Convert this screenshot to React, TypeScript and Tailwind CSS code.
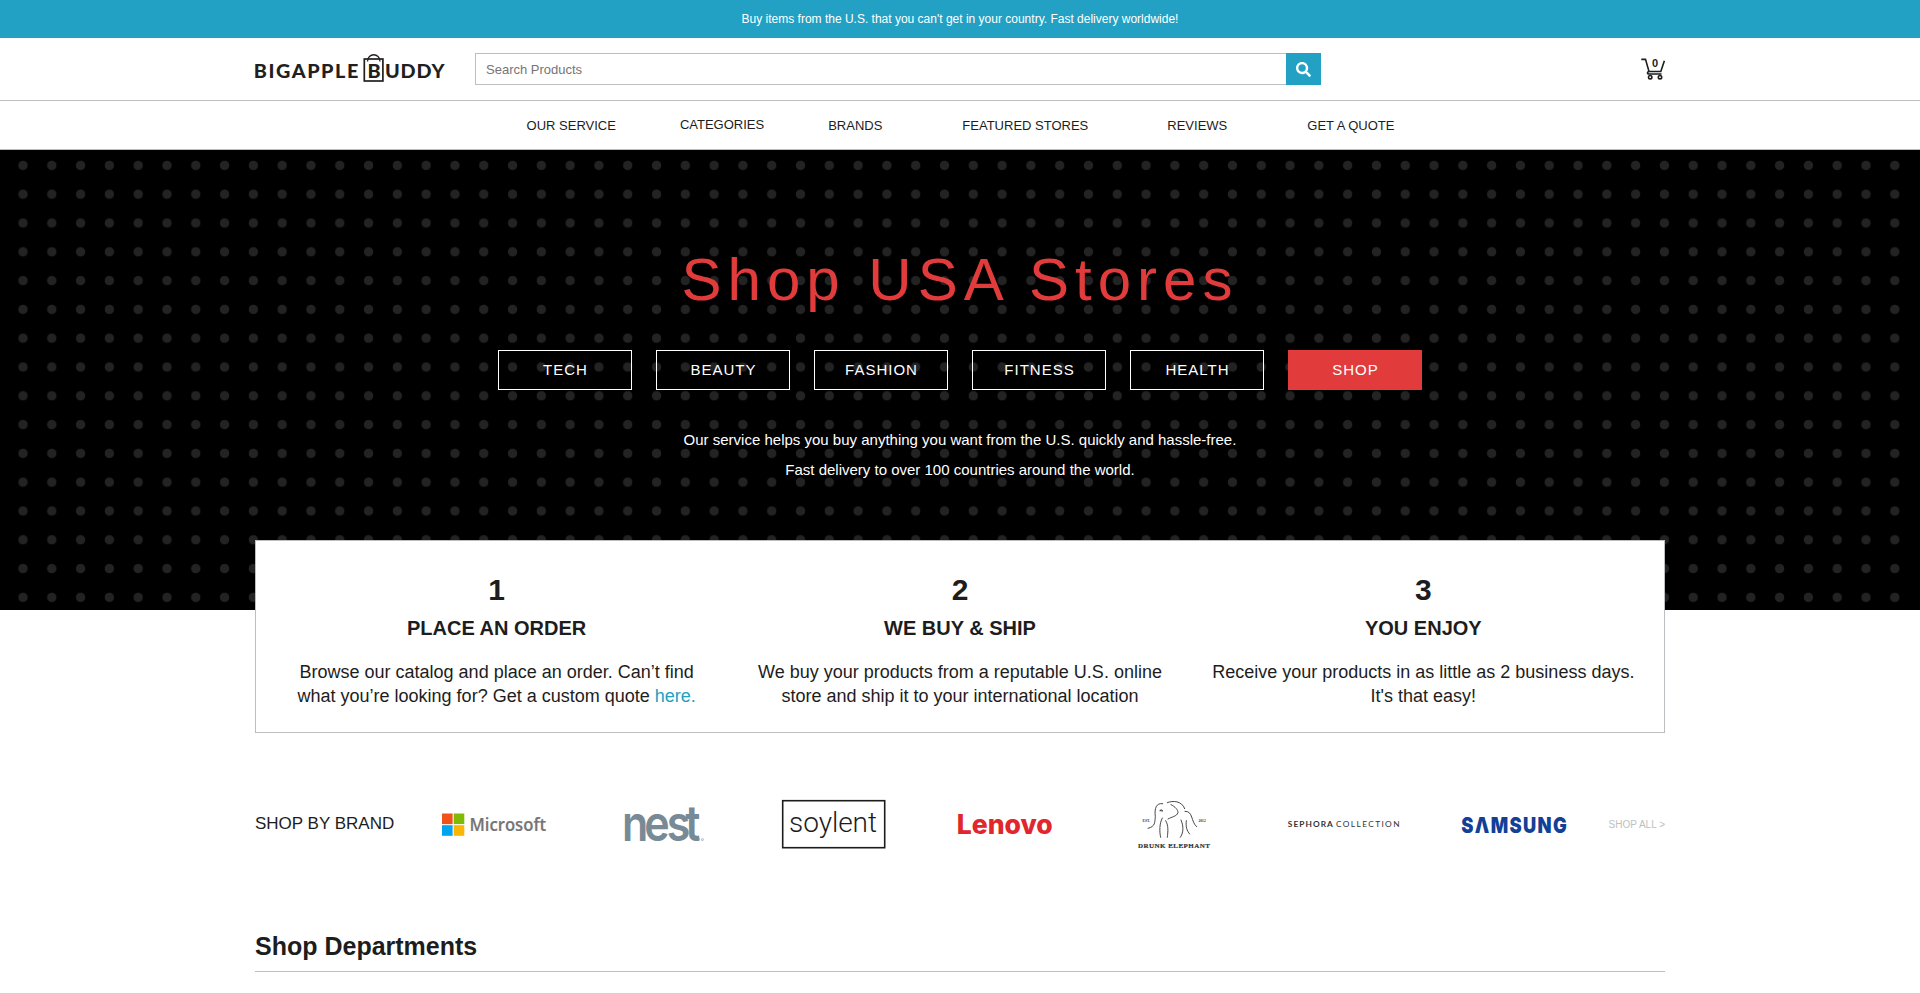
import React from 'react';
import { FaSearch } from 'react-icons/fa';

interface NavItem {
    label: string;
    className: string;
}

interface Step {
    number: number;
    title: string;
    body: React.ReactNode;
}

const navItems: NavItem[] = [
    { label: 'OUR SERVICE', className: 'px-10' },
    { label: 'CATEGORIES', className: 'px-6 pb-0.5' },
    { label: 'BRANDS', className: 'px-10' },
    { label: 'FEATURED STORES', className: 'pl-10 pr-[39px]' },
    { label: 'REVIEWS', className: 'px-10' },
    { label: 'GET A QUOTE', className: 'px-10' },
];

const heroLinks = ['TECH', 'BEAUTY', 'FASHION', 'FITNESS', 'HEALTH'];

const steps: Step[] = [
    {
        number: 1,
        title: 'PLACE AN ORDER',
        body: (
            <>
                Browse our catalog and place an order. Can’t find
                <br />
                what you’re looking for? Get a custom quote{' '}
                <a href="#" className="text-[#22a1c4]">
                    here.
                </a>
            </>
        ),
    },
    {
        number: 2,
        title: 'WE BUY & SHIP',
        body: (
            <>
                We buy your products from a reputable U.S. online
                <br />
                store and ship it to your international location
            </>
        ),
    },
    {
        number: 3,
        title: 'YOU ENJOY',
        body: (
            <>
                Receive your products in as little as 2 business days.
                <br />
                It's that easy!
            </>
        ),
    },
];

function Logo() {
    return (
        <svg width="190" height="62" viewBox="0 0 190 62" className="overflow-visible font-['Lato',sans-serif] font-black" fill="#231f20">
            <text x="-1.2" y="39.5" fontSize="19.8" textLength="104.5">
                BIGAPPLE
            </text>
            <rect x="109.3" y="21" width="18.6" height="22" fill="none" stroke="#231f20" strokeWidth="1.7" />
            <path d="M112.5 23.5C112.5 14.5 125 14.5 125 23.5" fill="none" stroke="#231f20" strokeWidth="1.3" />
            <text x="112.4" y="39.5" fontSize="19.8">
                B
            </text>
            <text x="130" y="39.5" fontSize="19.8" textLength="59.5">
                UDDY
            </text>
        </svg>
    );
}

function CartIcon() {
    return (
        <svg width="24" height="22" viewBox="0 0 24 22" fill="none" stroke="#1d1d1d" strokeWidth="1.6">
            <path d="M0.3 1.4H4.5L8 13.5H19.8L23.4 2.8" />
            <path d="M8 13.5C5.8 13.8 6 16 8 16H20.5" />
            <circle cx="9.2" cy="19.2" r="1.7" />
            <circle cx="19" cy="19.2" r="1.7" />
            <text x="11" y="9" fontSize="11" fill="#1d1d1d" stroke="none" className="font-bold">
                0
            </text>
        </svg>
    );
}

function BrandBox({ children }: { children: React.ReactNode }) {
    return (
        <svg width="170" height="60" viewBox="0 0 170 60" className="shrink-0">
            {children}
        </svg>
    );
}

function Brands() {
    return (
        <>
            <BrandBox>
                <rect x="33" y="20.5" width="10.6" height="10.6" fill="#f1511b" />
                <rect x="44.7" y="20.5" width="10.6" height="10.6" fill="#80bb01" />
                <rect x="33" y="32.2" width="10.6" height="10.6" fill="#02a4ef" />
                <rect x="44.7" y="32.2" width="10.6" height="10.6" fill="#fbb605" />
                <text
                    x="60.5"
                    y="38"
                    fontSize="18.5"
                    textLength="76.5"
                    lengthAdjust="spacingAndGlyphs"
                    fill="#757575"
                    stroke="#757575"
                    strokeWidth="0.2"
                    className="font-['Open_Sans',sans-serif] font-semibold"
                >
                    Microsoft
                </text>
            </BrandBox>
            <BrandBox>
                <text
                    x="0 26 52 73.5"
                    y="0"
                    fontSize="50"
                    fill="#788a96"
                    transform="translate(43 48) scale(0.86 1)"
                    className="font-['Inter',sans-serif] font-semibold"
                >
                    nest
                </text>
                <circle cx="123.4" cy="46.6" r="1" fill="none" stroke="#788a96" strokeWidth="0.6" />
            </BrandBox>
            <BrandBox>
                <rect x="33.7" y="7.7" width="102" height="47" fill="none" stroke="#1c1c1c" strokeWidth="1.6" />
                <text
                    x="40"
                    y="38.7"
                    fontSize="28"
                    textLength="88"
                    fill="#1c1c1c"
                    className="font-['Roboto',sans-serif] font-light"
                >
                    soylent
                </text>
            </BrandBox>
            <BrandBox>
                <text
                    x="37.8"
                    y="41"
                    fontSize="26.5"
                    textLength="96"
                    lengthAdjust="spacingAndGlyphs"
                    fill="#e1262d"
                    className="font-['Inter',sans-serif] font-extrabold"
                >
                    Lenovo
                </text>
            </BrandBox>
            <BrandBox>
                <g transform="translate(21 -3) scale(0.3333)" fill="none" stroke="#3a3a3a" strokeWidth="2.8" strokeLinecap="round">
                    <path d="M114 115C137 110 134 96 136 80C133 56 138 38 158 41" />
                    <path d="M150 61Q154 56 158 62Z" />
                    <path d="M172 38C188 31 216 32 224 56" />
                    <path d="M183 44C196 50 204 60 204 68C200 80 185 80 174 87" />
                    <path d="M157 84C148 100 148 125 152 142" />
                    <path d="M167 92C176 105 174 125 172 142" />
                    <path d="M213 90C222 110 220 130 211 142" />
                    <path d="M225 64C250 62 242 96 260 110" />
                    <path d="M229 92C227 110 230 122 239 132" />
                </g>
                <g className="font-['Liberation_Serif',serif] font-bold" fill="#333">
                    <text x="53.5" y="29.3" fontSize="3.6">
                        EST.
                    </text>
                    <text x="109.5" y="29.3" fontSize="3.6">
                        2012
                    </text>
                    <text x="49" y="55" fontSize="7" textLength="72" stroke="#333" strokeWidth="0.2">
                        DRUNK ELEPHANT
                    </text>
                </g>
            </BrandBox>
            <BrandBox>
                <g className="font-['Lato',sans-serif]" fill="#333" fontSize="8.3">
                    <text x="28.8" y="34" textLength="45" className="font-bold">
                        SEPHORA
                    </text>
                    <text x="77" y="34" textLength="63.5">
                        COLLECTION
                    </text>
                </g>
            </BrandBox>
            <BrandBox>
                <text
                    x="0"
                    y="0"
                    fontSize="22"
                    textLength="127"
                    fill="#133f96"
                    transform="translate(32.3 39.5) scale(0.83 1)"
                    aria-label="SAMSUNG"
                    className="font-['Inter',sans-serif] font-black"
                >
                    SΛMSUNG
                </text>
            </BrandBox>
        </>
    );
}

export default function App() {
    return (
        <div className="h-[993px] overflow-hidden bg-white font-['Liberation_Sans',Arial,sans-serif] text-[#1d1d1d]">
            <div className="flex h-[38px] items-center justify-center bg-[#22a1c4] text-xs text-white">
                Buy items from the U.S. that you can't get in your country. Fast delivery worldwide!
            </div>

            <header className="h-[63px] border-b border-[#bbbfc1]">
                <div className="mx-auto flex h-full w-[1410px] items-center">
                    <Logo />
                    <div className="ml-[30px] flex h-8">
                        <input
                            type="text"
                            placeholder="Search Products"
                            className="w-[811px] border border-r-0 border-[#bbbfc1] px-2.5 pt-0.5 text-[13px] outline-none placeholder:text-[#757575]"
                        />
                        <button className="flex w-[35px] items-center justify-center bg-[#22a1c4] text-[15px] text-white">
                            <FaSearch />
                        </button>
                    </div>
                    <div className="ml-auto">
                        <CartIcon />
                    </div>
                </div>
            </header>

            <nav className="flex h-[49px] items-center justify-center border-b border-[#bbbfc1] pt-0.5 pl-px text-[13px]">
                {navItems.map((item) => (
                    <a key={item.label} href="#" className={item.className}>
                        {item.label}
                    </a>
                ))}
            </nav>

            <section className="h-[460px] border-x-2 border-black bg-black bg-[radial-gradient(circle,#232323_4.3px,transparent_5.1px)] bg-[length:28.8px_28.8px] bg-[position:6.6px_1px] bg-clip-padding pt-[95px] text-center text-white">
                <h1 className="text-[60px] leading-[70px] tracking-[6px] text-[#e23b3b]">Shop USA Stores</h1>

                <div className="mt-[35px] flex justify-center gap-6 text-[15px] tracking-[1px]">
                    {heroLinks.map((label) => (
                        <a key={label} href="#" className="flex h-10 w-[134px] items-center justify-center border border-white pl-px">
                            {label}
                        </a>
                    ))}
                    <a href="#" className="flex h-10 w-[134px] items-center justify-center bg-[#e23b3b] pl-px">
                        SHOP
                    </a>
                </div>

                <p className="mt-[35px] text-[15px] leading-[30px]">
                    Our service helps you buy anything you want from the U.S. quickly and hassle-free.
                    <br />
                    Fast delivery to over 100 countries around the world.
                </p>
            </section>

            <section className="relative mx-auto -mt-[70px] flex h-[193px] w-[1410px] border border-[#bbbfc1] bg-white px-[9px] pt-8 text-center">
                {steps.map((step) => (
                    <div key={step.number} className="flex-1">
                        <div className="text-[30px] leading-[34px] font-bold">{step.number}</div>
                        <h2 className="mt-[9px] text-xl leading-6 font-bold">{step.title}</h2>
                        <p className="mt-5 text-lg leading-6">{step.body}</p>
                    </div>
                ))}
            </section>

            <section className="mx-auto mt-[60px] flex h-[60px] w-[1410px] items-center">
                <div className="w-[154px] pt-0.5 text-[17px] whitespace-nowrap">SHOP BY BRAND</div>
                <Brands />
                <a href="#" className="ml-auto pt-0.5 text-[10px] whitespace-nowrap text-[#bbbfc1]">
                    SHOP ALL &gt;
                </a>
            </section>

            <section className="mx-auto mt-[78px] w-[1410px]">
                <h2 className="h-[41px] border-b border-[#bbbfc1] text-[25px] leading-[30px] font-bold">Shop Departments</h2>
            </section>
        </div>
    );
}
